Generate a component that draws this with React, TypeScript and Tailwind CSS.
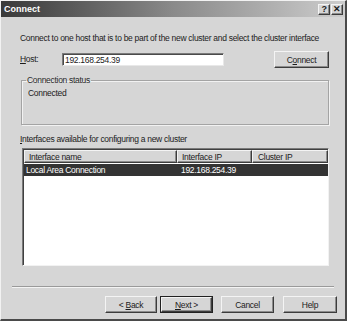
const raised =
  "border border-t-[#f4f4f4] border-l-[#f4f4f4] border-r-[#3c3c3c] border-b-[#3c3c3c] shadow-[inset_-1px_-1px_0_#8c8c8c] bg-[#d6d6d6]";

function Btn({
  children,
  width,
  def = false,
  className = "",
}: {
  children: React.ReactNode;
  width: string;
  def?: boolean;
  className?: string;
}) {
  if (def) {
    return (
      <div className={`h-[17px] border border-[#222] ${width} ${className}`}>
        <div className={`flex h-full items-center justify-center ${raised}`}>{children}</div>
      </div>
    );
  }
  return (
    <div className={`flex h-[17px] items-center justify-center ${raised} ${width} ${className}`}>
      {children}
    </div>
  );
}

export default function App() {
  return (
    <div className="h-[324px] w-[349px] bg-white font-['Liberation_Sans',Arial,sans-serif] text-[8.5px] leading-[10px] tracking-[-0.3px] text-[#1c1c1c]">
      <div className="flex h-[321px] w-[347px] flex-col border-t border-l border-r-2 border-b-2 border-t-[#f2f2f2] border-l-[#f2f2f2] border-r-[#4a4a4a] border-b-[#4a4a4a] bg-[#d6d6d6]">
        {/* title bar */}
        <div className="flex h-[16px] items-center bg-gradient-to-r from-[#3a3a3a] via-[#8a8a8a] to-[#cdcdcd] pl-[3px] pr-[2px]">
          <span className="text-[9px] font-bold tracking-[0px] text-white">Connect</span>
          <div className="ml-auto flex gap-[1px]">
            <div className={`flex h-[11px] w-[12px] items-center justify-center text-[9px] font-bold ${raised}`}>?</div>
            <div className={`flex h-[11px] w-[12px] items-center justify-center text-[9px] font-bold ${raised}`}>✕</div>
          </div>
        </div>

        <div className="flex flex-1 flex-col px-[18px]">
          <p className="mt-[16px] ml-[1px]">
            Connect to one host that is to be part of the new cluster and select the cluster interface
          </p>

          {/* host row */}
          <div className="mt-[8px] flex h-[17px] items-start">
            <span className="ml-[1px] mt-[3px] w-[42px]">
              <u>H</u>ost:
            </span>
            <div className="mt-[2px] flex h-[13px] w-[162px] items-center border border-t-[#7a7a7a] border-l-[#7a7a7a] border-r-[#e8e8e8] border-b-[#e8e8e8] bg-white pl-[2px] shadow-[inset_1px_1px_0_#4a4a4a]">
              192.168.254.39
            </div>
            <Btn width="w-[55px]" className="ml-auto mr-[-2px]">
              C<u>o</u>nnect
            </Btn>
          </div>

          {/* connection status */}
          <fieldset className="mt-[7px] ml-[2px] mr-[-2px] h-[50px] border border-[#a4a4a4] pl-[6px] shadow-[1px_1px_0_#f2f2f2,inset_1px_1px_0_#f2f2f2]">
            <legend className="ml-[-2px] px-[1px] text-[#2a2a2a]">Connection status</legend>
            <p className="mt-[3px]">Connected</p>
          </fieldset>

          <p className="mt-[9px] ml-[1px]">
            <u>I</u>nterfaces available for configuring a new cluster
          </p>

          {/* list view */}
          <div className="mt-[4px] ml-[3px] mr-[-2px] flex h-[118px] flex-col border border-t-[#7a7a7a] border-l-[#7a7a7a] border-r-[#f2f2f2] border-b-[#f2f2f2] bg-white shadow-[inset_1px_1px_0_#404040]">
            <div className="ml-[1px] mt-[1px] flex h-[13px]">
              <div className={`flex w-[153px] items-center pl-[4px] ${raised}`}>Interface name</div>
              <div className={`flex w-[75px] items-center pl-[4px] ${raised}`}>Interface IP</div>
              <div className={`flex flex-1 items-center pl-[5px] ${raised}`}>Cluster IP</div>
            </div>
            <div className="ml-[1px] mt-[1px] flex h-[12px] items-center bg-[#333333] text-white">
              <span className="w-[154px] pl-[2px]">Local Area Connection</span>
              <span className="pl-[3px]">192.168.254.39</span>
            </div>
          </div>

          {/* separator */}
          <div className="mt-[20px] mx-[-7px] h-[2px] border-t border-b border-t-[#9a9a9a] border-b-[#f4f4f4]" />

          {/* buttons */}
          <div className="mt-[8px] mr-[-10px] flex justify-end">
            <Btn width="w-[52px]">
              <span>
                &lt;&nbsp;<u>B</u>ack
              </span>
            </Btn>
            <Btn width="w-[53px]" def className="ml-[3px]">
              <span>
                <u>N</u>ext&nbsp;&gt;
              </span>
            </Btn>
            <Btn width="w-[53px]" className="ml-[8px]">
              Cancel
            </Btn>
            <Btn width="w-[54px]" className="ml-[9px]">
              Help
            </Btn>
          </div>
        </div>
      </div>
    </div>
  );
}
